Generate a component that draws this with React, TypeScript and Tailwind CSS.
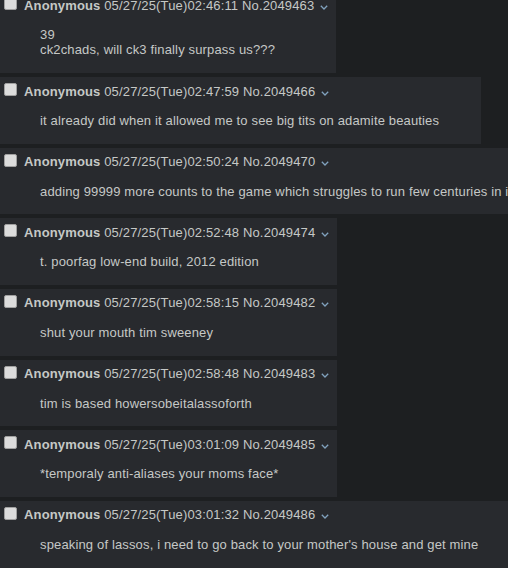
import React from "react";

type Post = { time: string; no: string; lines: string[] };

const posts: Post[] = [
  { time: "02:46:11", no: "2049463", lines: ["39", "ck2chads, will ck3 finally surpass us???"] },
  { time: "02:47:59", no: "2049466", lines: ["it already did when it allowed me to see big tits on adamite beauties"] },
  { time: "02:50:24", no: "2049470", lines: ["adding 99999 more counts to the game which struggles to run few centuries in it"] },
  { time: "02:52:48", no: "2049474", lines: ["t. poorfag low-end build, 2012 edition"] },
  { time: "02:58:15", no: "2049482", lines: ["shut your mouth tim sweeney"] },
  { time: "02:58:48", no: "2049483", lines: ["tim is based howersobeitalassoforth"] },
  { time: "03:01:09", no: "2049485", lines: ["*temporaly anti-aliases your moms face*"] },
  { time: "03:01:32", no: "2049486", lines: ["speaking of lassos, i need to go back to your mother's house and get mine"] },
];

function Chevron() {
  return (
    <svg width="8" height="5" viewBox="0 0 8 5" className="ml-[6px] mt-[7.5px] shrink-0">
      <path d="M0.8 0.8 L4 4 L7.2 0.8" fill="none" stroke="#81a2be" strokeWidth="1.3" />
    </svg>
  );
}

function PostBox({ p, first }: { p: Post; first: boolean }) {
  return (
    <div
      className={
        "flex flex-col bg-[#282a2e] whitespace-nowrap pt-[6px] pb-[15.67px] mb-[4px] shrink-0 " +
        (first ? "-mt-[8.67px]" : "")
      }
    >
      <div className="flex items-start pr-[8px] h-[15px]">
        <div className="ml-[4px] w-[13px] h-[13px] shrink-0 rounded-[2px] bg-[#dcdcdc] border border-[#a0a0a0]" />
        <div className="ml-[7px] leading-[15px] mt-[0.5px]">
          <span className="font-bold">Anonymous</span>{" "}
          <span>05/27/25(Tue){p.time}</span>{" "}
          <span>No.{p.no}</span>
        </div>
        <Chevron />
      </div>
      <div className="mt-[15px] pl-[40px] pr-[42px] leading-[15px]">
        {p.lines.map((l, i) => (
          <div key={i}>{l}</div>
        ))}
      </div>
    </div>
  );
}

export default function App() {
  return (
    <div
      className="w-[508px] h-[568px] overflow-hidden bg-[#1d1f21] text-[#c5c8c6] text-[13px] tracking-[0.15px] flex flex-col items-start"
      style={{ fontFamily: '"Liberation Sans", Arial, sans-serif' }}
    >
      {posts.map((p, i) => (
        <PostBox key={p.no} p={p} first={i === 0} />
      ))}
    </div>
  );
}
